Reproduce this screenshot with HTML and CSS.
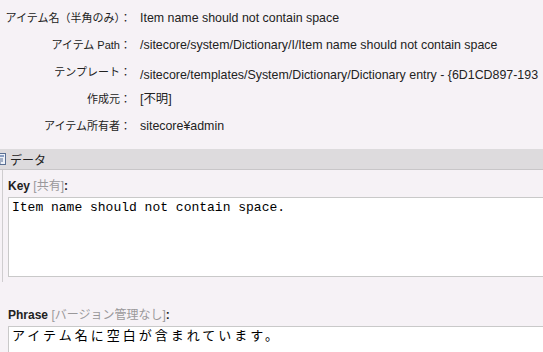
FILE: index.html
```html
<!DOCTYPE html>
<html lang="ja">
<head>
  <meta charset="UTF-8" />
  <title>Item name should not contain space</title>
  <link rel="stylesheet" href="styles.css">
</head>
<body>
  <div class="item-info">
    <div class="info-label">アイテム名（半角のみ）：</div>
    <div class="info-value">Item name should not contain space</div>

    <div class="info-label">アイテム Path：</div>
    <div class="info-value">/sitecore/system/Dictionary/I/Item name should not contain space</div>

    <div class="info-label">テンプレート：</div>
    <div class="info-value shifted">/sitecore/templates/System/Dictionary/Dictionary entry - {6D1CD897-193</div>

    <div class="info-label">作成元：</div>
    <div class="info-value">[不明]</div>

    <div class="info-label">アイテム所有者：</div>
    <div class="info-value">sitecore¥admin</div>
  </div>

  <div class="section-head">
    <svg class="section-icon" width="12" height="12" viewBox="0 0 12 12">
      <rect x="0.5" y="0.5" width="11" height="11" fill="#eef2f8" stroke="#5a6f93"/>
      <rect x="2" y="2" width="8" height="2" fill="#8aa0c4"/>
      <path d="M3 6h6M3 8h6M3 10h4" stroke="#5a6f93" stroke-width="1"/>
    </svg>
    <span>データ</span>
  </div>

  <div class="fields">
    <div class="field marked">
      <div class="field-label"><b>Key</b> <span class="hint">[共有]</span><b>:</b></div>
      <div class="field-input mono">Item name should not contain space.</div>
    </div>

    <div class="field">
      <div class="field-label"><b>Phrase</b> <span class="hint">[バージョン管理なし]</span><b>:</b></div>
      <div class="field-input mono wide">アイテム名に空白が含まれています。</div>
    </div>
  </div>
</body>
</html>
```

FILE: styles.css
```css
* {
  margin: 0;
  padding: 0;
  box-sizing: border-box;
}

body {
  background-color: #f6f2f6;
  font-family: "Liberation Sans", "Noto Sans CJK JP", sans-serif;
  font-size: 12px;
  color: #222;
  overflow: hidden;
  width: 543px;
  height: 352px;
}

.item-info {
  display: grid;
  grid-template-columns: 131px 1fr;
  grid-auto-rows: 27px;
  column-gap: 9px;
  padding-top: 5px;
  white-space: nowrap;
}

.info-label {
  font-size: 11px;
  text-align: right;
  line-height: 27px;
}

.info-value {
  font-size: 12.4px;
  line-height: 27px;
}

.info-value.shifted {
  padding-top: 3px;
}

.section-head {
  margin-top: 9px;
  height: 21px;
  background-color: #dddbdd;
  border-bottom: 1px solid #c8c6c8;
  display: flex;
  align-items: center;
  gap: 4px;
  font-size: 12px;
}

.section-icon {
  margin-left: -6px;
}

.fields {
  width: 620px;
}

.field {
  margin-left: 2px;
  padding: 8px 0 5px 5px;
  border-left: 1px solid transparent;
}

.field.marked {
  border-left-color: #cfcdcf;
}

.field + .field {
  margin-top: 25px;
  padding-top: 0;
}

.field-label {
  font-size: 12px;
  line-height: 16px;
  margin-bottom: 3px;
  color: #222;
}

.field-label .hint {
  color: #9a989a;
}

.field-input {
  background-color: #fff;
  border: 1px solid #c9c9c9;
  height: 80px;
  padding: 2px 3px;
}

.mono {
  font-family: "Liberation Mono", "Noto Sans CJK JP", monospace;
  font-size: 13px;
  line-height: 16px;
  color: #000;
}

.mono.wide {
  letter-spacing: 3px;
}
```
